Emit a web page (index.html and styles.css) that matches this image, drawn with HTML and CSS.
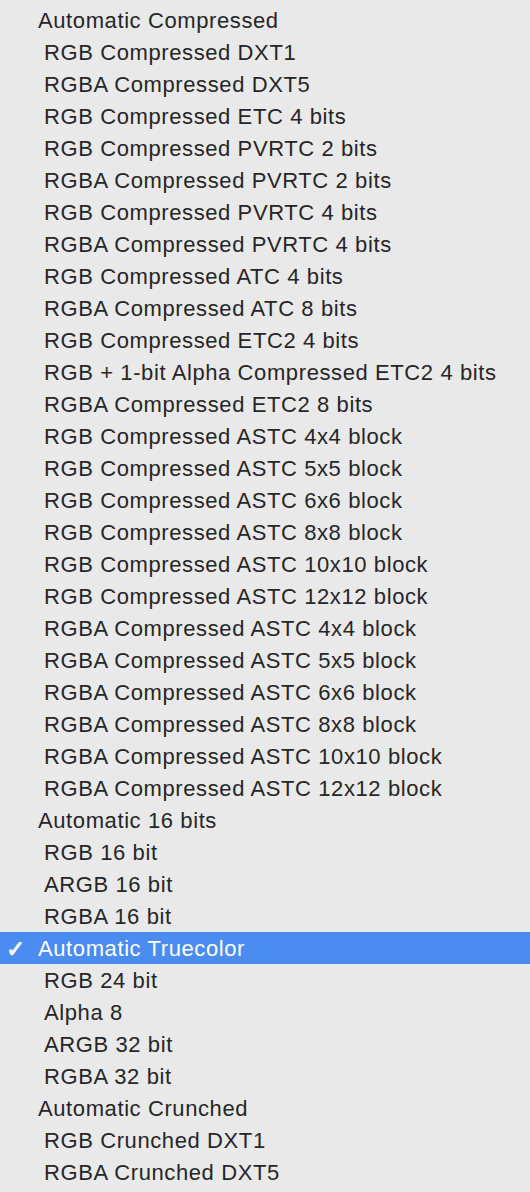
FILE: index.html
```html
<!DOCTYPE html>
<html>
<head>
<meta charset="utf-8">
<link rel="stylesheet" href="styles.css">
</head>
<body>
<ul class="menu">
  <li class="item header">Automatic Compressed</li>
  <li class="item">RGB Compressed DXT1</li>
  <li class="item">RGBA Compressed DXT5</li>
  <li class="item">RGB Compressed ETC 4 bits</li>
  <li class="item">RGB Compressed PVRTC 2 bits</li>
  <li class="item">RGBA Compressed PVRTC 2 bits</li>
  <li class="item">RGB Compressed PVRTC 4 bits</li>
  <li class="item">RGBA Compressed PVRTC 4 bits</li>
  <li class="item">RGB Compressed ATC 4 bits</li>
  <li class="item">RGBA Compressed ATC 8 bits</li>
  <li class="item">RGB Compressed ETC2 4 bits</li>
  <li class="item">RGB + 1-bit Alpha Compressed ETC2 4 bits</li>
  <li class="item">RGBA Compressed ETC2 8 bits</li>
  <li class="item">RGB Compressed ASTC 4x4 block</li>
  <li class="item">RGB Compressed ASTC 5x5 block</li>
  <li class="item">RGB Compressed ASTC 6x6 block</li>
  <li class="item">RGB Compressed ASTC 8x8 block</li>
  <li class="item">RGB Compressed ASTC 10x10 block</li>
  <li class="item">RGB Compressed ASTC 12x12 block</li>
  <li class="item">RGBA Compressed ASTC 4x4 block</li>
  <li class="item">RGBA Compressed ASTC 5x5 block</li>
  <li class="item">RGBA Compressed ASTC 6x6 block</li>
  <li class="item">RGBA Compressed ASTC 8x8 block</li>
  <li class="item">RGBA Compressed ASTC 10x10 block</li>
  <li class="item">RGBA Compressed ASTC 12x12 block</li>
  <li class="item header">Automatic 16 bits</li>
  <li class="item">RGB 16 bit</li>
  <li class="item">ARGB 16 bit</li>
  <li class="item">RGBA 16 bit</li>
  <li class="item header selected"><span class="check">✓</span>Automatic Truecolor</li>
  <li class="item">RGB 24 bit</li>
  <li class="item">Alpha 8</li>
  <li class="item">ARGB 32 bit</li>
  <li class="item">RGBA 32 bit</li>
  <li class="item header">Automatic Crunched</li>
  <li class="item">RGB Crunched DXT1</li>
  <li class="item">RGBA Crunched DXT5</li>
</ul>
</body>
</html>
```
FILE: styles.css
```css
html, body {
  margin: 0;
  padding: 0;
  background: #e9e9e9;
}
body {
  width: 530px;
  height: 1192px;
  overflow: hidden;
  font-family: "Liberation Sans", Arial, sans-serif;
  font-size: 22px;
  letter-spacing: 0.6px;
  color: #262626;
}
.menu {
  list-style: none;
  margin: 0;
  padding: 4px 0;
}
.item {
  position: relative;
  height: 32px;
  line-height: 34px;
  padding-left: 44px;
  white-space: nowrap;
}
.item.header {
  padding-left: 38px;
}
.item.selected {
  background: #4a8cf0;
  color: #ffffff;
}
.check {
  position: absolute;
  left: 6px;
  top: 0;
  font-size: 23px;
  font-weight: bold;
  letter-spacing: 0;
}
```
